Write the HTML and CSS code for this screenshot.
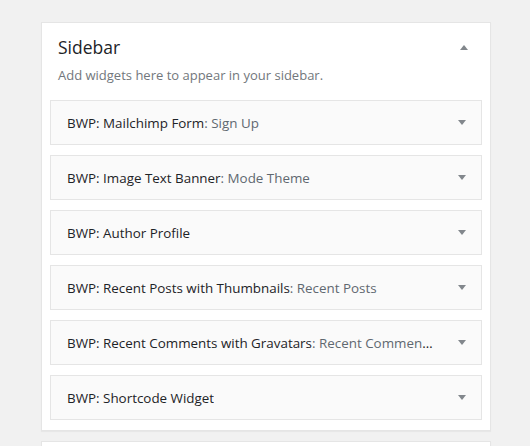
FILE: index.html
```html
<!DOCTYPE html>
<html>
<head>
<meta charset="utf-8">
<link rel="stylesheet" href="styles.css">
</head>
<body>
<div class="page">
  <section class="sidebar">
    <div class="sidebar-head">
      <h2 class="sidebar-title">Sidebar</h2>
      <span class="toggle up"></span>
    </div>
    <p class="sidebar-desc">Add widgets here to appear in your sidebar.</p>
    <div class="widgets">
      <div class="widget"><span class="widget-title">BWP: Mailchimp Form<span class="in-title">: Sign Up</span></span><span class="toggle down"></span></div>
      <div class="widget"><span class="widget-title">BWP: Image Text Banner<span class="in-title">: Mode Theme</span></span><span class="toggle down"></span></div>
      <div class="widget"><span class="widget-title">BWP: Author Profile</span><span class="toggle down"></span></div>
      <div class="widget"><span class="widget-title">BWP: Recent Posts with Thumbnails<span class="in-title">: Recent Posts</span></span><span class="toggle down"></span></div>
      <div class="widget"><span class="widget-title">BWP: Recent Comments with Gravatars<span class="in-title">: Recent Comments</span></span><span class="toggle down"></span></div>
      <div class="widget"><span class="widget-title">BWP: Shortcode Widget</span><span class="toggle down"></span></div>
    </div>
  </section>
  <section class="sidebar next"></section>
</div>
</body>
</html>
```
FILE: styles.css
```css
html, body {
  margin: 0;
  padding: 0;
  background: #f1f1f1;
  font-family: "Open Sans", "Liberation Sans", sans-serif;
  color: #23282d;
}
.page {
  padding: 22px 0 0 41px;
  display: flex;
  flex-direction: column;
  gap: 10px;
}
.sidebar {
  width: 448px;
  background: #fff;
  border: 1px solid #e5e5e5;
  box-shadow: 0 1px 1px rgba(0,0,0,0.04);
  padding-bottom: 10px;
}
.sidebar.next {
  height: 40px;
}
.sidebar-head {
  display: flex;
  align-items: center;
  justify-content: space-between;
  padding: 12px 22px 0 16px;
  height: 24px;
}
.sidebar-title {
  margin: 0;
  font-size: 17.5px;
  font-weight: 400;
  line-height: 24px;
  color: #1d2327;
}
.sidebar-desc {
  margin: 6px 0 0 16px;
  font-size: 13px;
  line-height: 20px;
  color: #72777c;
}
.widgets {
  margin: 15px 8px 0 8px;
  display: flex;
  flex-direction: column;
  gap: 10px;
}
.widget {
  height: 43px;
  background: #fafafa;
  border: 1px solid #e5e5e5;
  display: flex;
  align-items: center;
  justify-content: space-between;
  padding: 0 15px 0 16px;
}
.widget-title {
  font-size: 13.4px;
  font-weight: 400;
  white-space: nowrap;
  overflow: hidden;
  text-overflow: ellipsis;
  max-width: 366px;
  color: #1d2327;
}
.in-title {
  color: #5f6870;
}
.toggle {
  width: 0;
  height: 0;
  border-left: 4px solid transparent;
  border-right: 4px solid transparent;
  flex-shrink: 0;
}
.toggle.up {
  border-bottom: 5px solid #82878c;
}
.toggle.down {
  border-top: 5px solid #82878c;
}
```
